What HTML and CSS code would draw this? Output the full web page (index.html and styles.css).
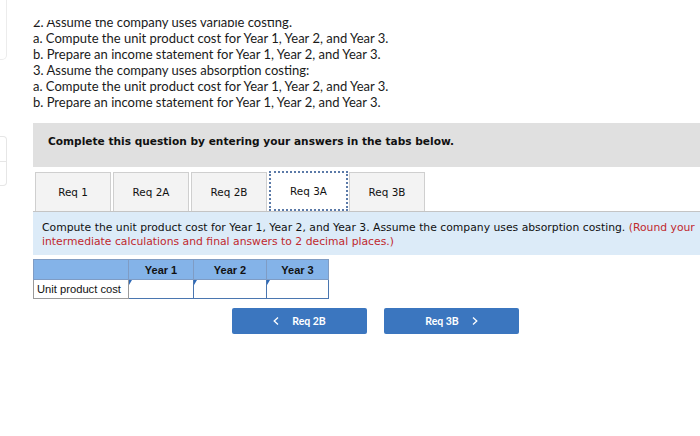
FILE: index.html
```html
<!DOCTYPE html>
<html>
<head>
<meta charset="utf-8">
<link rel="stylesheet" href="styles.css">
</head>
<body>
<div class="page">
  <div class="rail">
    <div class="rail-top"></div>
    <div class="rail-box"><div class="rail-cell"></div><div class="rail-cell"></div></div>
  </div>
  <div class="main">
    <div class="intro-clip">
      <div class="intro">
        <p>2. Assume the company uses variable costing.</p>
        <p>a. Compute the unit product cost for Year 1, Year 2, and Year 3.</p>
        <p>b. Prepare an income statement for Year 1, Year 2, and Year 3.</p>
        <p>3. Assume the company uses absorption costing:</p>
        <p>a. Compute the unit product cost for Year 1, Year 2, and Year 3.</p>
        <p>b. Prepare an income statement for Year 1, Year 2, and Year 3.</p>
      </div>
    </div>
    <div class="banner">Complete this question by entering your answers in the tabs below.</div>
    <div class="tabs">
      <div class="tab">Req 1</div>
      <div class="tab">Req 2A</div>
      <div class="tab">Req 2B</div>
      <div class="tab active">Req 3A</div>
      <div class="tab">Req 3B</div>
    </div>
    <div class="instr">Compute the unit product cost for Year 1, Year 2, and Year 3. Assume the company uses absorption costing. <span class="red">(Round your intermediate calculations and final answers to 2 decimal places.)</span></div>
    <table class="grid">
      <tr class="head">
        <th class="lbl"></th>
        <th class="c1">Year 1</th>
        <th class="c2">Year 2</th>
        <th class="c3">Year 3</th>
      </tr>
      <tr class="row">
        <td class="lbl">Unit product cost</td>
        <td class="in"><span class="mark"></span></td>
        <td class="in"><span class="mark"></span></td>
        <td class="in"><span class="mark"></span></td>
      </tr>
    </table>
    <div class="nav">
      <div class="btn"><svg class="chev" width="6" height="8" viewBox="0 0 6 8"><path d="M5 0.5 L1.2 4 L5 7.5" fill="none" stroke="#fff" stroke-width="1.3"/></svg><span>Req 2B</span></div>
      <div class="btn"><span>Req 3B</span><svg class="chev" width="6" height="8" viewBox="0 0 6 8"><path d="M1 0.5 L4.8 4 L1 7.5" fill="none" stroke="#fff" stroke-width="1.3"/></svg></div>
    </div>
  </div>
</div>
</body>
</html>
```
FILE: styles.css
```css
html, body { margin: 0; padding: 0; background: #fff; }
body { width: 700px; height: 436px; overflow: hidden; }
.page { display: flex; }
.rail { width: 8px; flex: none; display: flex; flex-direction: column; }
.rail-top { height: 68px; margin-top: -10px; border: 1px solid #ececec; border-left: none; border-radius: 0 5px 5px 0; width: 6px; }
.rail-box { margin-top: 76px; width: 6px; height: 48px; border: 1px solid #e6e6e6; border-left: none; border-radius: 0 4px 4px 0; display: flex; flex-direction: column; }
.rail-cell { flex: 1; }
.rail-cell + .rail-cell { border-top: 1px solid #e6e6e6; }
.main { margin-left: 25px; width: 667px; }
.intro-clip { margin-top: 20px; height: 90px; overflow: hidden; }
.intro { margin-top: -6px; font-family: "Lato", "Liberation Sans", sans-serif; font-size: 13px; line-height: 16px; color: #1a1a1a; }
.intro p { margin: 0; }
.banner { margin-top: 13px; height: 44px; box-sizing: border-box; padding: 11px 15px 0; background: #e0e0e0; font-family: "DejaVu Sans", Verdana, sans-serif; font-weight: bold; font-size: 10.6px; line-height: 14px; color: #111; }
.tabs { display: flex; margin-top: 5px; padding-left: 2px; height: 39px; }
.tab { width: 76px; box-sizing: border-box; margin-right: 2px; border: 1px solid #cfcfcf; border-bottom: none; background: #f3f3f3; display: flex; align-items: center; justify-content: center; font-family: "DejaVu Sans", Verdana, sans-serif; font-size: 10.4px; color: #111; }
.tab.active { background: #fff; border: 2px dotted #5b7aa8; width: 79px; margin-right: 1px; margin-top: -1px; height: 40px; }
.instr { border-top: 1px solid #c4c4c4; background: #dcebf8; padding: 9px 0 6px 9px; font-family: "DejaVu Sans", Verdana, sans-serif; font-size: 10.8px; line-height: 14px; color: #111; }
.red { color: #c0282d; }
.grid { margin-top: 4px; border-collapse: collapse; font-family: "Liberation Sans", Arial, sans-serif; font-size: 11px; }
.grid th, .grid td { padding: 0; box-sizing: border-box; }
.head th { height: 20px; background: #84b3e8; border: 1px solid #7f9cc4; font-weight: bold; color: #111; text-align: center; }
.lbl { width: 95px; }
.c1 { width: 65px; }
.c2 { width: 73px; }
.c3 { width: 62px; }
.row td { height: 19px; }
td.lbl { border: 1px solid #9a9a9a; padding-left: 3px; text-align: left; color: #111; font-size: 11.2px; }
td.in { position: relative; border: 1.5px solid #4a76b0; background: #fff; }
.mark { position: absolute; left: 0; top: 0; width: 0; height: 0; border-top: 5px solid #2f6ab8; border-right: 3px solid transparent; }
.nav { display: flex; gap: 17px; margin-top: 9px; margin-left: 199px; }
.btn { width: 135px; height: 26px; border-radius: 2px; background: #3b76bf; color: #fff; display: flex; align-items: center; justify-content: center; gap: 13px; font-family: "Lato", "Liberation Sans", sans-serif; font-weight: bold; font-size: 10.5px; }
.chev { display: block; }
```
